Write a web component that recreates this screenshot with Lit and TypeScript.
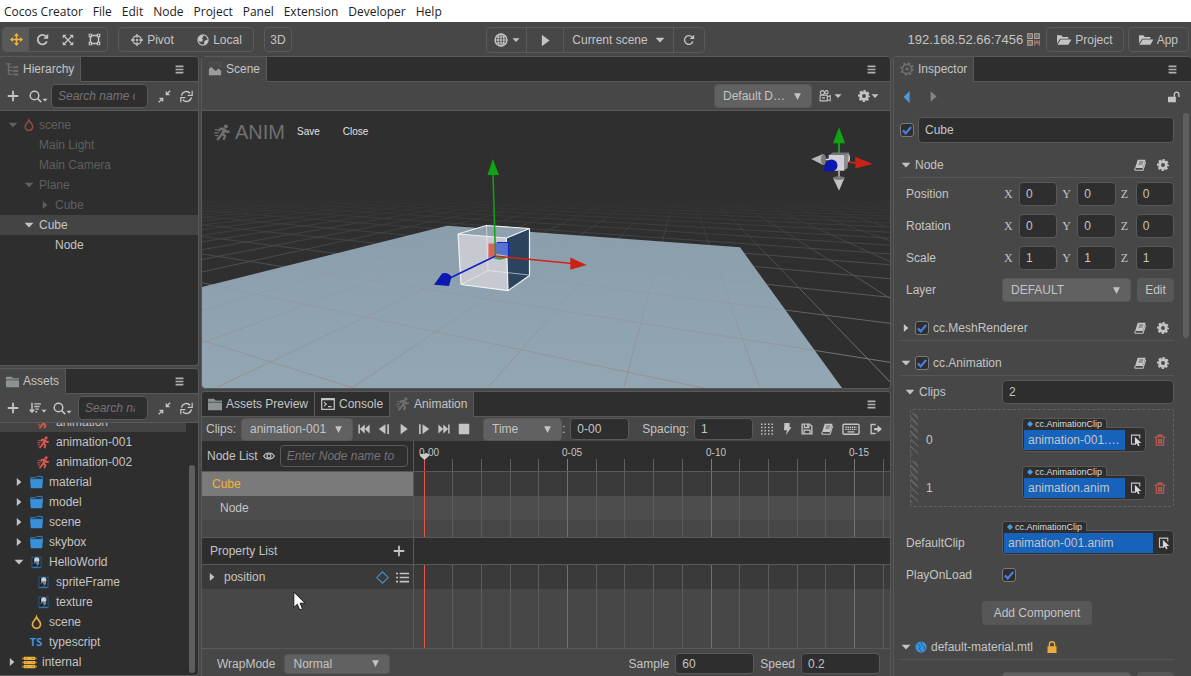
import { LitElement, html, svg, css, nothing, TemplateResult } from "lit";
import { customElement, state } from "lit/decorators.js";
import { classMap } from "lit/directives/class-map.js";
import { styleMap } from "lit/directives/style-map.js";

const f = "currentColor";

const runner = svg`
  <circle cx="11.2" cy="2.3" r="1.9" fill=${f} />
  <path d="M10 4.6 7.6 9.2 10.4 11.2 9 15M7.6 9.2 5.6 12 3 15M10 4.6 6.2 4.4 4.6 6.6M10 5.2 12 7.6 14.6 7" fill="none" stroke=${f} stroke-width="2.2" stroke-linejoin="round" />
  <path d="M8.500 4 11.500 5.500 9.500 9.800 6.800 8.600z" fill=${f} />
  <path d="M1 5.5h3M0 8.3h4.5M1 11h3" stroke=${f} stroke-width="1.1" />`;

const picture = svg`
  <rect x="2.500" y="1.500" width="11" height="13" fill="#0d1c2b" stroke="#2a6ea8" />
  <circle cx="8.300" cy="4.800" r="3.300" fill="#c9d0d4" />
  <circle cx="8" cy="9.600" r="3.600" fill="#7d868c" />
  <path d="M4 10 7 8l2 4 3-3v4H5z" fill="#20262b" />
  <path d="M3 13.800h10" stroke="#3d93d6" />`;

const icons: Record<string, TemplateResult<2>> = {
  move: svg`<path d="M8 0 11 3.600H9v3.400h3.400V5L16 8l-3.600 3V9H9v3.400h2L8 16l-3-3.600h2V9H3.600v2L0 8l3.600-3v2H7V3.600H5z" fill=${f} />`,
  rotate: svg`<path d="M13.300 10.300A5.800 5.800 0 1 1 12 4" fill="none" stroke=${f} stroke-width="2.300" /><path d="M15 1v6.200H8.800z" fill=${f} />`,
  scale: svg`<path d="M3 3 13 13M13 3 3 13" stroke=${f} stroke-width="1.800" /><path d="M1 1h5L1 6zM15 1v5L10 1zM1 15v-5l5 5zM15 15h-5l5-5z" fill=${f} />`,
  rect: svg`<path d="M3 3h10v10H3z" fill="none" stroke=${f} stroke-width="1.800" /><path d="M.8.8h4.400v4.400H.8zM10.800.8h4.400v4.400h-4.400zM.8 10.800h4.400v4.400H.8zM10.800 10.800h4.400v4.400h-4.400z" fill=${f} /><path d="M2.300 2.300h1.400v1.400H2.300zM12.300 2.300h1.400v1.400h-1.400zM2.300 12.300h1.400v1.400H2.300zM12.300 12.300h1.400v1.400h-1.400z" fill="#474747" />`,
  pivot: svg`<circle cx="8" cy="8" r="5.600" fill="none" stroke=${f} stroke-width="1.600" /><path d="M8 0v5M8 11v5M0 8h5M11 8h5M8 6.500v3M6.500 8h3" stroke=${f} stroke-width="1.800" />`,
  globe: svg`<circle cx="8" cy="8" r="6.800" fill="none" stroke=${f} stroke-width="1.500" /><path d="M1.500 8C1.500 4 5 1.500 8 1.500c1 2-.5 3.500-2 4.500 2 0 2.500 2 1 3.500S3 11 1.500 8zM9.500 10l3-2.500 2 .5c0 3-2 5.500-5 6.500z" fill=${f} />`,
  web: svg`<circle cx="8" cy="8" r="6.800" fill="none" stroke=${f} stroke-width="1.600" /><path d="M8 1v14M1 8h14M2.500 4.500h11M2.500 11.500h11" stroke=${f} stroke-width="1.200" /><ellipse cx="8" cy="8" rx="3.400" ry="6.800" fill="none" stroke=${f} stroke-width="1.300" />`,
  play: svg`<path d="M3.500 1 13 8l-9.500 7z" fill=${f} />`,
  reload: svg`<path d="M13.300 10A5.800 5.800 0 1 1 12 4" fill="none" stroke=${f} stroke-width="1.800" /><path d="M14.800 1v5.800H9z" fill=${f} />`,
  down: svg`<path d="M1 4.500h14L8 11.800z" fill=${f} />`,
  right: svg`<path d="M4.500 1.500v13L11.800 8z" fill=${f} />`,
  arrow: svg`<path d="M2 2h12L8 14z" fill=${f} />`,
  menu: svg`<path d="M1 2.500h14M1 8h14M1 13.500h14" stroke=${f} stroke-width="3" />`,
  tree: svg`<path d="M0 1h6M3 1v13M3 5h5M8 9.500H3M3 14h5" stroke="#6d6d6d" stroke-width="1.600" fill="none" /><path d="M9 4h6v2.500H9zM9 8.500h6V11H9zM9 13h6v2.500H9z" fill="#6d6d6d" />`,
  scenery: svg`<path d="M1 15V8l3-2.500L7 9l2 1 3-2.500L15 10v5z" fill="#9a9c9c" /><path d="M1 1h2M5 1h2M9 1h2M13 1h2M1 4h1M7 4h1M13 4h2" stroke="#5d5d5d" stroke-width="1.500" />`,
  gearline: svg`<circle cx="8" cy="8" r="5.300" fill="none" stroke=${f} stroke-width="1.800" /><circle cx="8" cy="8" r="6.800" fill="none" stroke=${f} stroke-width="2" stroke-dasharray="2.400 2.940" /><circle cx="8" cy="8" r="1.800" fill=${f} />`,
  gear: svg`<circle cx="8" cy="8" r="4.500" fill="none" stroke=${f} stroke-width="3.800" /><circle cx="8" cy="8" r="6.800" fill="none" stroke=${f} stroke-width="2.400" stroke-dasharray="3 2.340" stroke-dashoffset="1.500" />`,
  tabfolder: svg`<path d="M0 2h7l1.500 2H16v11H0z" fill="#8d9393" /><path d="M0 6h16" stroke="#4b4b4b" />`,
  folder: svg`<path d="M1 2h6l1.500-1.500H15V4H1z" fill="none" stroke="#3990d8" /><path d="M0 4h16l-1 11H1z" fill="#3990d8" />`,
  openfolder: svg`<path d="M0 12V2.500h5l1.500 2H13V6.500H3.500z" fill=${f} /><path d="M4.200 7.500H16.500L13 13.500H.5z" fill=${f} />`,
  plus: svg`<path d="M8 1v14M1 8h14" stroke=${f} stroke-width="2.400" />`,
  search: svg`<circle cx="6.800" cy="6.800" r="5.300" fill="none" stroke=${f} stroke-width="1.800" /><path d="m10.500 10.500 4.500 4.500" stroke=${f} stroke-width="2" />`,
  sort: svg`<path d="M4 1v12M1 10l3 3.500L7 10" fill="none" stroke=${f} stroke-width="2" /><path d="M7 2.500h9M7 6h7M8.500 9.500H13M8.500 13H11" stroke=${f} stroke-width="1.900" />`,
  collapse: svg`<path d="M9.500 1v5.500H15zM1 9.500h5.500V15z" fill=${f} /><path d="m10 6 5-5M6 10l-5 5" stroke=${f} stroke-width="1.700" />`,
  refresh: svg`<path d="M2 7a6 6 0 0 1 10.500-3M14 9a6 6 0 0 1-10.500 3" fill="none" stroke=${f} stroke-width="1.600" /><path d="M15 1v5.500H9.500M1 15V9.500h5.500" fill="none" stroke=${f} stroke-width="1.500" />`,
  flame: svg`<path d="M8 1.200C9 4 13 6.500 13 10.300A5 4.900 0 0 1 3 10.300C3 6.500 7 4.500 8 1.200z" fill="none" stroke=${f} stroke-width="2.100" />`,
  runner,
  picture,
  stack: svg`<path d="M1 1h14v4H1zM1 6h14v4H1zM1 11h14v4H1z" fill="#e9b143" /><path d="M0 2v2M0 7v2M0 12v2M16 2v2M16 7v2M16 12v2" stroke="#e9b143" stroke-width="1.500" /><path d="M3 3h2M3 8h2M3 13h2M11 3h2M11 8h2M11 13h2" stroke="#a87c2e" />`,
  console: svg`<path d="M.8 1.800h14.400v12.400H.8z" fill="none" stroke=${f} stroke-width="1.400" /><path d="M1 3h14" stroke=${f} stroke-width="1.600" /><path d="m3.500 6 2.500 2.200-2.500 2.200M8 11h4" fill="none" stroke=${f} stroke-width="1.300" />`,
  camera: svg`<circle cx="4.500" cy="3.500" r="2.700" fill="none" stroke=${f} stroke-width="1.400" /><circle cx="10" cy="3" r="2.200" fill="none" stroke=${f} stroke-width="1.400" /><path d="M1.500 7h9.500v7.500H1.500zM11 9.500l4-2v7l-4-2M4 10.500h4" fill="none" stroke=${f} stroke-width="1.400" />`,
  qr: svg`<path d="M1 1h5.500v5.500H1zM9.500 1H15v5.500H9.500zM1 9.500h5.500V15H1z" fill="none" stroke="#b5a79c" stroke-width="1.500" /><path d="M3 3h1.500v1.500H3zM11.500 3H13v1.500h-1.500zM3 11.500h1.500V13H3z" fill="#c4c4c4" /><path d="M9.500 9v6.500M12.300 9v4M15 9v6.500M9.500 12h5" stroke="#b98574" stroke-width="1.400" />`,
  book: svg`<path d="M5 1h10.500L12 12H1.500z" fill=${f} /><path d="M1.500 12c-1 2 0 3 1 3H12L15.500 4" fill="none" stroke=${f} stroke-width="1.500" /><path d="M6.800 4h5.500M6 6.700h5.500" stroke="#474747" stroke-width="1.100" />`,
  unlock: svg`<path d="M0 7.500h10.500V15H0z" fill=${f} /><path d="M8.500 8V4.500a3 3 0 0 1 6 0V8" fill="none" stroke=${f} stroke-width="1.800" />`,
  lock: svg`<path d="M2 7h12v9H2z" fill=${f} /><path d="M4.500 7.500V4.500a3.500 3.500 0 0 1 7 0v3" fill="none" stroke=${f} stroke-width="1.800" />`,
  left: svg`<path d="M11.500 0v16L3.500 8z" fill=${f} />`,
  first: svg`<path d="M.5 2h2v12h-2zM9 2v12L2.500 8zM15.500 2v12L9 8z" fill=${f} />`,
  last: svg`<path d="M15.500 2h-2v12h2zM7 2v12l6.500-6zM.5 2v12L7 8z" fill=${f} />`,
  prev: svg`<path d="M10 1.500v13L1 8z" fill=${f} /><path d="M13.500 1.500v13" stroke=${f} stroke-width="2.200" />`,
  next: svg`<path d="M6 1.500v13L15 8z" fill=${f} /><path d="M2.500 1.500v13" stroke=${f} stroke-width="2.200" />`,
  stop: svg`<rect x="1" y="1" width="14" height="14" rx="1" fill=${f} />`,
  dots: svg`<path d="M0 1.500h16M0 6h16M0 10.300h16M0 14.700h16" stroke=${f} stroke-width="2" stroke-dasharray="2 2.660" />`,
  bolt: svg`<path d="M4.500 0h7v5.500h2.500L6.500 16 8 9.500H4z" fill=${f} />`,
  save: svg`<path d="M1.500 1.500h10l3 3v10h-13z" fill="none" stroke=${f} stroke-width="1.800" /><path d="M4.500 2v4h6V2M4 14.500V9.500h8v5" fill="none" stroke=${f} stroke-width="1.700" /><path d="M8 2h2v3H8z" fill=${f} />`,
  keyboard: svg`<rect x="-1.200" y="2.500" width="18.400" height="11.500" rx="1.500" fill="none" stroke=${f} stroke-width="1.600" /><path d="M1.500 6h13M1.500 8.500h13" stroke=${f} stroke-width="1.500" stroke-dasharray="1.700 .8" /><path d="M4 11.300h8" stroke=${f} stroke-width="1.600" />`,
  exit: svg`<path d="M7.500 2h-6v12h6" fill="none" stroke=${f} stroke-width="1.800" /><path d="M5.500 6.500H10V3l6 5-6 5V9.500H5.500z" fill=${f} />`,
  eye: svg`<path d="M.8 8C4 2.500 12 2.500 15.200 8 12 13.500 4 13.500.8 8z" fill="none" stroke=${f} stroke-width="1.400" /><circle cx="8" cy="8" r="2.600" fill="none" stroke=${f} stroke-width="1.500" />`,
  diamond: svg`<path d="M8 1 15 8 8 15 1 8z" fill="none" stroke="#4596d8" stroke-width="1.300" />`,
  dot: svg`<path d="M8 0 16 8 8 16 0 8z" fill="#4a9ade" />`,
  list: svg`<path d="M0 3h2.500M0 8h2.500M0 13h2.500M4.500 3H16M4.500 8H16M4.500 13H16" stroke=${f} stroke-width="2" />`,
  pick: svg`<path d="M7 13.500H2v-12h11V6" fill="none" stroke=${f} stroke-width="1.500" /><path d="M6.500 3.500v11.500l2.600-2.300 1.700 3.500 2-1-1.600-3.200h3.800z" fill="#d8d8d8" />`,
  trash: svg`<path d="M1 4h14M5.500 3.500V1.500h5v2M2.800 4.500 3.300 15h9.400l.5-10.500M6 6.500v6.500M8 6.500v6.500M10 6.500v6.500" fill="none" stroke="#cc5b53" stroke-width="1.500" />`,
  material: svg`<circle cx="8" cy="8" r="7.500" fill="#3b92da" /><path d="M3 3l4 4-1 4 3 4M8 1l1 4 4 3-1 4" fill="none" stroke="#1f5f98" stroke-width="1.200" />`,
  check: svg`<path d="m2.500 8.500 3.800 4L13.500 4" fill="none" stroke="#4a7ddd" stroke-width="3" />`,
};

const icon = (name: string, size = 12, tone = "") =>
  html`<svg class=${"ic " + tone} width=${size} height=${size} viewBox="0 0 16 16" aria-hidden="true">${icons[name]}</svg>`;

interface Row {
  label: string;
  depth: number;
  arrow?: "down" | "right";
  icon?: string;
  tone?: string;
  on?: boolean;
  dim?: boolean;
}

const MENU = ["Cocos Creator", "File", "Edit", "Node", "Project", "Panel", "Extension", "Developer", "Help"];

const NODES: Row[] = [
  { label: "scene", depth: 0, arrow: "down", icon: "flame", tone: "rust", dim: true },
  { label: "Main Light", depth: 1, dim: true },
  { label: "Main Camera", depth: 1, dim: true },
  { label: "Plane", depth: 1, arrow: "down", dim: true },
  { label: "Cube", depth: 2, arrow: "right", dim: true },
  { label: "Cube", depth: 1, arrow: "down", on: true },
  { label: "Node", depth: 2 },
];

const ASSETS: Row[] = [
  { label: "animation", depth: 2, icon: "runner", tone: "red", on: true },
  { label: "animation-001", depth: 2, icon: "runner", tone: "red" },
  { label: "animation-002", depth: 2, icon: "runner", tone: "red" },
  { label: "material", depth: 1, arrow: "right", icon: "folder" },
  { label: "model", depth: 1, arrow: "right", icon: "folder" },
  { label: "scene", depth: 1, arrow: "right", icon: "folder" },
  { label: "skybox", depth: 1, arrow: "right", icon: "folder" },
  { label: "HelloWorld", depth: 1, arrow: "down", icon: "picture" },
  { label: "spriteFrame", depth: 2, icon: "picture" },
  { label: "texture", depth: 2, icon: "picture" },
  { label: "scene", depth: 1, icon: "flame", tone: "amber" },
  { label: "typescript", depth: 1, icon: "ts" },
  { label: "internal", depth: 0, arrow: "right", icon: "stack" },
];

const TRANSFORM: [string, string][] = [["Position", "0"], ["Rotation", "0"], ["Scale", "1"]];

/* Timeline: pixels per frame, where frame zero sits, and the width the other columns take */
const FRAME = 28.7;
const ORIGIN = 10;
const CHROME = 717;
const frameX = (i: number) => Math.floor(ORIGIN + i * FRAME);

/* Ground grid: two vanishing points on the horizon */
const HORIZON = 167;
const range = (a: number, b: number) => Array.from({ length: b - a + 1 }, (_, i) => a + i);
const gridPath = [
  ...range(-36, 14).map((k) => `M682 ${HORIZON}L${895 + 135.5 * k} 387`),
  ...range(-3, 20).map((k) => `M-349 ${HORIZON}L890 ${HORIZON + 1 / (0.00512 + 0.001277 * k)}`),
].join("");

@customElement("app-root")
export class AppRoot extends LitElement {
  @state() private tab = "Animation";
  @state() private pageWidth = window.innerWidth;

  private onResize = () => (this.pageWidth = window.innerWidth);

  connectedCallback() {
    super.connectedCallback();
    window.addEventListener("resize", this.onResize);
  }

  disconnectedCallback() {
    window.removeEventListener("resize", this.onResize);
    super.disconnectedCallback();
  }

  private get frames() {
    return range(0, Math.max(0, Math.floor((this.pageWidth - CHROME) / FRAME)));
  }

  static styles = css`
    :host { display: block; font: 12px/16px "Liberation Sans", Arial, sans-serif; color: #c4c4c4; --bg: #474747; --dark: #2e2e2e; --line: #595959; }
    * { box-sizing: border-box; }
    .app { display: flex; flex-direction: column; height: 100vh; min-height: 600px; background: var(--bg); overflow: hidden; }
    button, input, select { font: inherit; color: inherit; margin: 0; }
    button { background: none; border: 0; padding: 0; display: inline-flex; align-items: center; justify-content: center; flex: none; }
    .ic { display: block; flex: none; overflow: visible; }
    .red { color: #d9584f; } .rust { color: #8d4a40; } .amber { color: #e9ad3f; } .blue { color: #4a9ade; } .grey { color: #858585; } .faint { color: #6f6f6f; }

    .menubar { display: flex; gap: 10px; height: 22px; flex: none; background: #fff; padding: 0 4px; font: 12px/23px "Open Sans", "Noto Sans", sans-serif; color: #1c1c1c; }
    .menubar button { align-items: flex-start; }
    .topbar { display: grid; grid-template-columns: 1fr auto 1fr; height: 34px; flex: none; padding: 5px 2px 0; align-items: start; }
    .tools { display: flex; gap: 10px; }
    .tools.end { justify-content: flex-end; gap: 4px; align-items: center; }
    .group { display: flex; border: 1px solid var(--line); border-radius: 4px; overflow: hidden; height: 25px; }
    .group button { width: 26px; }
    .group .on { background: #595959; color: #efb340; }
    .group .wide { width: 67px; gap: 4px; }
    .group.mid { height: 26px; }
    .group.mid button { width: 37px; gap: 4px; border-right: 1px solid var(--line); }
    .group.mid .globe { width: 40px; }
    .group.mid .pick { width: 110px; gap: 7px; }
    .group.mid button:last-child { border-right: 0; width: 30px; }
    .ip { font-size: 13px; }
    .bordered { border: 1px solid var(--line); border-radius: 4px; height: 25px; padding: 0 10px; gap: 4px; margin-left: 2px; }
    .bordered + .bordered { margin-left: 0; }

    .work { flex: 1; min-height: 0; display: grid; grid-template-columns: 199px minmax(0, 1fr) 298px; gap: 2px; }
    .side { display: grid; grid-template-rows: 310fr 308fr; gap: 2px; min-height: 0; }
    .centre { display: grid; grid-template-rows: 333fr 285fr; gap: 2px; min-height: 0; }
    .panel { display: flex; flex-direction: column; min-height: 0; min-width: 0; border: 1px solid var(--line); border-radius: 4px; overflow: hidden; }
    .side .panel { border-left: 0; border-top-left-radius: 0; border-bottom-left-radius: 0; }
    .inspector { border-right: 0; }
    .panel.open { border-bottom: 0; border-bottom-left-radius: 0; border-bottom-right-radius: 0; }
    .tabs { display: flex; height: 25px; flex: none; background: var(--dark); }
    .tab { gap: 4px; padding: 0 6px; border-right: 1px solid var(--line); border-bottom: 1px solid var(--line); }
    .tab.on { background: var(--bg); border-bottom-color: var(--bg); }
    .fill { flex: 1; display: flex; align-items: center; justify-content: flex-end; padding-right: 14px; border-bottom: 1px solid var(--line); color: #b0b0b0; }
    .bar { display: flex; align-items: center; height: 29px; flex: none; padding: 0 5px 0 7px; gap: 10px; border-bottom: 1px solid var(--line); }
    .bar input { flex: 1; min-width: 0; height: 24px; }
    .bar .more { gap: 0; align-items: flex-end; }
    .bar .near { margin-left: -7px; }
    .bar .close { margin-left: -4px; }
    .bar .pair { display: flex; gap: 9px; }
    .field { background: var(--dark); border: 1px solid var(--line); border-radius: 4px; padding: 0 6px; height: 24px; min-width: 0; outline: 0; }
    .field::placeholder { color: #77727a; font-style: italic; opacity: 1; }
    .field.find { padding: 0 12px 0 6px; }

    .rows { flex: 1; min-height: 0; background: var(--dark); padding: 4px 0; overflow: hidden; }
    .row { display: flex; align-items: center; height: 20px; }
    .row .ar { width: 12px; margin-right: 4px; display: flex; justify-content: center; }
    .row .ico { margin-right: 4px; }
    .row.on { background: #444; }
    .row.dim { color: #5f5f5f; }
    .split { flex: 1; display: flex; min-height: 0; background: var(--dark); overflow: hidden; }
    .split .rows { padding: 0; margin-top: -11px; }
    .split .row .ico { width: 14px; display: flex; justify-content: center; margin-right: 6px; }
    .ts { color: #3f97dd; font: bold 11px/16px "Open Sans", sans-serif; }
    .thumb { width: 6px; border-radius: 3px; background: #5e5e5e; margin: 42px 3px 2px 3px; }

    .sel { display: grid; align-items: center; height: 24px; background: #616161; border: 1px solid #585858; border-radius: 4px; flex: none; min-width: 0; }
    .sel select { grid-area: 1/1; appearance: none; background: none; border: 0; outline: 0; padding: 0 24px 0 8px; width: 100%; height: 100%; min-width: 0; }
    .sel .ic { grid-area: 1/1; justify-self: end; margin-right: 9px; pointer-events: none; }
    .w98 { width: 98px; } .w112 { width: 112px; } .w79 { width: 79px; } .w106 { width: 106px; }
    .scenebar { justify-content: flex-end; padding-right: 11px; gap: 7px; }
    .scenebar .more { gap: 3px; align-items: center; }
    .scenebar .more + .more { margin-left: 9px; gap: 1px; }

    .view { flex: 1; min-height: 0; display: grid; background: #2f2f2f; }
    .view > * { grid-area: 1/1; min-width: 0; min-height: 0; }
    .world { width: 100%; height: 100%; display: block; }
    .hud { display: flex; align-items: center; align-self: start; height: 42px; padding-left: 12px; gap: 12px; font-size: 10px; color: #e0e0e0; }
    .hud .mode { display: flex; align-items: center; gap: 4px; font-size: 20px; line-height: 24px; color: #707070; }
    .hud button { margin-right: 11px; }

    .clipbar { display: flex; align-items: center; height: 24px; flex: none; padding: 0 11px 0 4px; overflow: hidden; }
    .clipbar .sel { height: 23px; margin-left: 5px; }
    .clipbar .field { width: 59px; height: 22px; margin-left: 5px; flex: none; }
    .clipbar label { margin-left: 13px; white-space: nowrap; }
    .transport { display: flex; gap: 8px; margin: 0 13px 0 5px; }
    .clipbar .transport + .sel { margin-left: 0; }
    .actions { display: flex; align-items: center; gap: 8px; margin-left: 8px; }
    .actions .kb { margin: 0 4px 0 3px; }
    .tl { flex: 1; min-height: 0; display: grid; grid-template-columns: 212px minmax(0, 1fr); grid-template-rows: 31px 66px 27px minmax(0, 1fr); border-bottom: 1px solid var(--line); }
    .cell { border-right: 1px solid var(--line); position: relative; min-height: 0; min-width: 0; }
    .head { display: flex; align-items: center; background: var(--dark); border-bottom: 1px solid var(--line); padding: 0 5px; gap: 5px; }
    .head .field { flex: 1; height: 22px; padding-right: 12px; }
    .head.plist { justify-content: space-between; padding: 0 8px; }
    .ruler { background: var(--dark); border-bottom: 1px solid var(--line); }
    .track { background: linear-gradient(#3a3a3a 24px, #4d4d4d 24px, #4d4d4d 48px, var(--bg) 48px); border-bottom: 1px solid var(--line); min-height: 0; overflow: hidden; }
    .track.one { background: linear-gradient(#3a3a3a 24px, var(--bg) 24px); border-bottom: 0; }
    .strip { border-bottom: 1px solid var(--line); }
    .strip.one { border-bottom: 0; }
    .item { display: flex; align-items: center; height: 24px; padding: 0 10px; }
    .item.cube { background: #7a7a7a; color: #f0b136; }
    .item.sub { background: #4d4d4d; padding-left: 18px; }
    .item.curve { background: #3a3a3a; padding: 0 4px 0 5px; gap: 7px; }
    .grow { flex: 1; }
    .canvas { display: block; width: 100%; height: 100%; shape-rendering: crispEdges; }
    .canvas text { font-size: 10px; fill: #c4c4c4; }
    .pointer { position: absolute; left: 91px; top: 26px; }
    .foot { display: flex; align-items: center; height: 27px; flex: none; padding: 2px 10px 0 15px; gap: 6px; }
    .foot .sel { height: 20px; margin-left: 3px; }
    .foot .field { width: 79px; height: 21px; }

    .nav { display: flex; align-items: center; height: 29px; flex: none; padding: 0 11px 0 7px; gap: 14px; }
    .scroll { flex: 1; min-height: 0; display: flex; overflow: hidden; }
    .bin { width: 6px; height: 225px; border-radius: 3px; background: #5e5e5e; margin: 2px 2px 0 0; flex: none; }
    .body { flex: 1; min-width: 0; padding: 6px 9px 0 6px; }
    .ck { display: inline-grid; width: 14px; height: 14px; flex: none; place-items: center; }
    .ck input { grid-area: 1/1; appearance: none; width: 14px; height: 14px; background: var(--dark); border: 1px solid #7b7b7b; border-radius: 3px; }
    .ck .ic { grid-area: 1/1; pointer-events: none; }
    .title { display: flex; align-items: center; gap: 4px; }
    .title .field { flex: 1; height: 26px; }
    .sec { display: flex; align-items: center; height: 26px; border-bottom: 1px solid #565656; padding: 0 5px 0 1px; gap: 4px; }
    .sec.t9 { margin-top: 9px; } .sec.t13 { margin-top: 13px; }
    .sec .mtl { margin-left: 9px; }
    .sec button + button { margin-left: 7px; }
    .props { padding-top: 4px; display: grid; gap: 8px; }
    .prop { display: grid; grid-template-columns: 96px minmax(0, 1fr); align-items: end; padding-left: 6px; }
    .prop .name { display: flex; align-items: center; gap: 4px; height: 24px; }
    .prop .name.fold { margin-left: -1px; }
    .prop.flat { align-items: center; }
    .prop.flat .name { height: 14px; }
    .vec { display: grid; grid-template-columns: repeat(3, 1fr); gap: 3px; }
    .vec label { display: grid; grid-template-columns: 12px minmax(0, 1fr); align-items: center; gap: 3px; font: 12px/16px "Liberation Serif", serif; padding-left: 2px; }
    .vec .field { font: 12px/16px "Liberation Sans", sans-serif; width: 100%; }
    .duo { display: grid; grid-template-columns: 1fr 37px; gap: 6px; }
    .solid { background: #575757; border-radius: 4px; height: 24px; }
    .clips { border: 1px dashed #626262; border-radius: 3px; margin: 5px 0 0 10px; }
    .clip { display: grid; grid-template-columns: 7px 88px minmax(0, 1fr) auto; column-gap: 8px; height: 48px; align-items: end; padding: 0 7px 6px 0; }
    .clip .num, .clip .del { height: 24px; line-height: 24px; }
    .grip { align-self: stretch; margin: 3px 0 -3px; background: repeating-linear-gradient(45deg, #5f5f5f 0 2px, var(--bg) 2px 5px); }
    .ref { display: flex; flex-direction: column; align-items: flex-start; min-width: 0; }
    .kind { display: flex; align-items: center; gap: 2px; height: 10px; padding: 0 4px; font-size: 9px; line-height: 10px; background: var(--dark); border: 1px solid var(--line); border-bottom: 0; border-radius: 3px 3px 0 0; position: relative; margin-bottom: -1px; color: #dcdcdc; }
    .slot { display: flex; align-items: center; width: 100%; height: 25px; background: var(--dark); border: 1px solid var(--line); border-radius: 0 4px 4px 4px; padding: 0 3px 0 1px; gap: 5px; }
    .slot span { flex: 1; min-width: 0; height: 20px; line-height: 20px; background: #1762bb; padding: 0 4px; overflow: hidden; text-overflow: ellipsis; white-space: nowrap; }
    .extra { display: grid; gap: 13px; margin-top: 14px; }
    .add { display: flex; justify-content: center; margin: 19px 0 9px; }
    .add .solid { width: 110px; }
    .tail { margin-top: 12px; }
  `;

  private tree(rows: Row[], base: number, step: number, size: number) {
    return rows.map(
      (r) => html`<div class=${classMap({ row: true, on: !!r.on, dim: !!r.dim })} style=${styleMap({ paddingLeft: base + r.depth * step + "px" })}>
        <span class="ar">${r.arrow ? icon(r.arrow, 10) : nothing}</span>
        ${r.icon === "ts" ? html`<span class="ico ts">TS</span>` : r.icon ? html`<span class="ico">${icon(r.icon, size, r.tone)}</span>` : nothing}
        <span>${r.label}</span>
      </div>`
    );
  }

  private select(label: string, value: string, width = "") {
    return html`<span class=${"sel " + width}><select aria-label=${label}><option>${value}</option></select>${icon("arrow", 9)}</span>`;
  }

  private check(label: string) {
    return html`<span class="ck"><input type="checkbox" checked aria-label=${label} />${icon("check", 12)}</span>`;
  }

  private btn(name: string, label: string, size = 12, cls = "", tone = "") {
    return html`<button class=${cls} aria-label=${label}>${icon(name, size, tone)}</button>`;
  }

  private ref(value: string) {
    return html`<div class="ref">
      <div class="kind">${icon("dot", 6)}cc.AnimationClip</div>
      <div class="slot"><span>${value}</span>${this.btn("pick", "Pick asset", 12)}</div>
    </div>`;
  }

  private fill() {
    return html`<div class="fill">${this.btn("menu", "Panel menu", 9)}</div>`;
  }

  private section(name: string, arrow: "down" | "right", checked: boolean, cls = "") {
    return html`<div class=${"sec " + cls}>
      ${icon(arrow, 10)}${checked ? this.check(name + " enabled") : nothing}<span class="grow">${name}</span>
      ${this.btn("book", "Help", 12)}${this.btn("gear", "Settings", 12)}
    </div>`;
  }

  private lanes() {
    return html`<svg class="canvas">
      ${this.frames.map((i) => svg`<rect x=${frameX(i)} y="0" width="1" height="100%" fill=${i % 5 ? "#5c5c5c" : "#717171"} />`)}
      <rect x=${ORIGIN} y="0" width="1" height="100%" fill="#e5564c" />
    </svg>`;
  }

  private world() {
    return html`<svg class="world" viewBox="202 111 688 277" preserveAspectRatio="xMidYMid slice" role="img" aria-label="Scene view">
      <defs>
        <linearGradient id="fade" gradientUnits="userSpaceOnUse" x1="0" y1="196" x2="0" y2="388">
          <stop offset="0" stop-color="#000" /><stop offset="0.15" stop-color="#2c2c2c" /><stop offset="0.5" stop-color="#888" /><stop offset="1" stop-color="#fff" />
        </linearGradient>
        <mask id="depth" maskUnits="userSpaceOnUse" x="0" y="100" width="1300" height="300"><rect x="0" y="196" width="1300" height="200" fill="url(#fade)" /></mask>
        <clipPath id="floor"><path d="M202 287 447 225.700 740 247.300 842 388H202z" /></clipPath>
        <linearGradient id="ground" x1="0" y1="0" x2="0" y2="1"><stop offset="0" stop-color="#8b9eac" /><stop offset="1" stop-color="#93a6b4" /></linearGradient>
        <linearGradient id="seam" gradientUnits="userSpaceOnUse" x1="0" y1="240" x2="0" y2="388"><stop offset="0" stop-color="#958f8f" stop-opacity="0" /><stop offset="1" stop-color="#958f8f" /></linearGradient>
      </defs>
      <g mask="url(#depth)"><path d=${gridPath} fill="none" stroke="#8a8a8a" stroke-width="0.900" /></g>
      <path d="M202 287 447 225.700 740 247.300 842 388H202z" fill="url(#ground)" />
      <g clip-path="url(#floor)"><path d=${gridPath} fill="none" stroke="url(#seam)" stroke-width="1" /></g>

      <path d="M458 234 506.300 238 508 290.700 461 284.500z" fill="#c6c9cf" />
      <path d="M506.300 238 529.500 228.500V275.500L508 290.700z" fill="#2b435c" />
      <path d="M458 234 486.200 225.500 529.500 228.500 506.300 238z" fill="#8da1ae" />
      <path d="M458 234 486.200 225.500 529.500 228.500 506.300 238zM461 284.500 508 290.700 529.500 275.500M458 234 461 284.500M506.300 238 508 290.700M529.500 228.500V275.500" fill="none" stroke="#f1f2f2" stroke-width="1.200" />
      <path d="M486.500 226 488 270.500M461 284.500 488 270.500 529 275" fill="none" stroke="#f1f2f2" stroke-opacity="0.600" />
      <path d="M488.500 243.500h7.500V255l-7.500 3z" fill="#e0605a" />
      <path d="M496 242.500h12.500V256L496 254z" fill="#5a72cc" /><path d="M497 242.500h11.500V256" fill="none" stroke="#1027c9" stroke-width="1.200" />
      <path d="M493 258l7-2 7 1.500q-6 4-14 .5z" fill="#3f9a4b" />
      <path d="M495.500 256 493 174" stroke="#15a01a" stroke-width="1.500" /><path d="M492.800 159 487.500 175H499z" fill="#10a314" />
      <path d="M495.500 256 572 263.500" stroke="#cf2418" stroke-width="1.500" /><path d="M586.600 265 570.300 257.500V269.700z" fill="#cb2217" />
      <path d="M495.500 256 450 278" stroke="#0f1fc2" stroke-width="1.500" /><path d="M434 284.700 442 273.500Q448 271.500 451.500 277L449 286z" fill="#0c18b4" />

      <path d="M839 143v12" stroke="#10a314" stroke-width="2" /><path d="M839 127.300 833 143.300H845z" fill="#10a314" />
      <path d="M848 162l8 1" stroke="#cf2418" stroke-width="1.500" /><path d="M872.700 164 855.300 156.700V168.500z" fill="#cb2217" />
      <path d="M825 159.500h6" stroke="#ddd" stroke-width="1.500" /><path d="M811.300 159 823 154v11z" fill="#b8b8bb" /><ellipse cx="823.500" cy="159.500" rx="2.500" ry="5.500" fill="#7b7b7e" />
      <ellipse cx="848" cy="158" rx="2" ry="4" fill="#cfcfd1" />
      <path d="M828.700 155 833 152.500H849L844 155z" fill="#77777a" /><path d="M828.700 155H844V170.700H828.700z" fill="#d0d0d6" /><path d="M844 155 849 152.500 847.500 168 844 170.700z" fill="#8d8d91" />
      <path d="M839 171v7" stroke="#999" stroke-width="2" /><path d="M833 178H844.500L839 190.700z" fill="#c2c2c4" /><ellipse cx="838.800" cy="178" rx="5.800" ry="1.800" fill="#77777a" />
      <circle cx="831.500" cy="165.500" r="6" fill="#0c17b2" /><path d="M823 171.500 826 163 833 171z" fill="#0c17b2" />
    </svg>`;
  }

  render() {
    const bottomTabs: [string, string, string][] = [["Assets Preview", "tabfolder", ""], ["Console", "console", ""], ["Animation", "runner", "faint"]];
    return html`<div class="app">
      <nav class="menubar">${MENU.map((m) => html`<button>${m}</button>`)}</nav>
      <header class="topbar">
        <div class="tools">
          <div class="group">
            ${this.btn("move", "Move", 13, "on")}${this.btn("rotate", "Rotate", 13)}${this.btn("scale", "Scale", 12)}${this.btn("rect", "Rect", 13)}
          </div>
          <div class="group">
            <button class="wide">${icon("pivot", 12)}Pivot</button><button class="wide">${icon("globe", 12)}Local</button>
          </div>
          <div class="group"><button>3D</button></div>
        </div>
        <div class="group mid">
          <button class="globe" aria-label="Preview platform">${icon("web", 14)}${icon("down", 8)}</button>
          ${this.btn("play", "Play", 13)}
          <button class="pick">Current scene ${icon("down", 10)}</button>
          ${this.btn("reload", "Reload", 12)}
        </div>
        <div class="tools end">
          <span class="ip">192.168.52.66:7456</span>${this.btn("qr", "QR code", 13)}
          <button class="bordered">${icon("openfolder", 14)}Project</button>
          <button class="bordered">${icon("openfolder", 14)}App</button>
        </div>
      </header>

      <main class="work">
        <div class="side">
          <section class="panel">
            <div class="tabs"><button class="tab on">${icon("tree", 13)}Hierarchy</button>${this.fill()}</div>
            <div class="bar">
              ${this.btn("plus", "Create node")}
              <button class="more" aria-label="Search type">${icon("search", 13)}${icon("down", 6)}</button>
              <input class="field find near" aria-label="Search nodes" placeholder="Search name or UUID" />
              <div class="pair">${this.btn("collapse", "Collapse", 13)}${this.btn("refresh", "Refresh", 13)}</div>
            </div>
            <div class="rows">${this.tree(NODES, 7, 16, 12)}</div>
          </section>
          <section class="panel">
            <div class="tabs"><button class="tab on">${icon("tabfolder", 13)}Assets</button>${this.fill()}</div>
            <div class="bar">
              ${this.btn("plus", "Create asset")}
              <button class="more" aria-label="Sort">${icon("sort", 12)}${icon("down", 6)}</button>
              <button class="more close" aria-label="Search type">${icon("search", 13)}${icon("down", 6)}</button>
              <input class="field find close" aria-label="Search assets" placeholder="Search name" />
              <div class="pair">${this.btn("collapse", "Collapse", 13)}${this.btn("refresh", "Refresh", 13)}</div>
            </div>
            <div class="split"><div class="rows">${this.tree(ASSETS, 6, 7, 13)}</div><div class="thumb"></div></div>
          </section>
        </div>

        <div class="centre">
          <section class="panel">
            <div class="tabs"><button class="tab on">${icon("scenery", 14)}Scene</button>${this.fill()}</div>
            <div class="bar scenebar">
              ${this.select("Design resolution", "Default D…", "w98")}
              <button class="more" aria-label="Camera">${icon("camera", 12)}${icon("down", 8)}</button>
              <button class="more" aria-label="Gizmo settings">${icon("gear", 12)}${icon("down", 8)}</button>
            </div>
            <div class="view">
              ${this.world()}
              <div class="hud"><span class="mode">${icon("runner", 17)}ANIM</span><button>Save</button><button>Close</button></div>
            </div>
          </section>

          <section class="panel open">
            <div class="tabs">
              ${bottomTabs.map(([name, ic, tone]) => html`<button class=${classMap({ tab: true, on: this.tab === name })} @click=${() => (this.tab = name)}>${icon(ic, 14, tone)}${name}</button>`)}
              ${this.fill()}
            </div>
            <div class="clipbar">
              <span>Clips:</span>${this.select("Clips", "animation-001", "w112")}
              <div class="transport">
                ${this.btn("first", "First frame")}${this.btn("prev", "Previous frame")}${this.btn("play", "Play")}${this.btn("next", "Next frame")}${this.btn("last", "Last frame")}${this.btn("stop", "Stop")}
              </div>
              ${this.select("Unit", "Time", "w79")}:
              <input class="field" aria-label="Current time" value="0-00" />
              <label for="spacing">Spacing:</label><input id="spacing" class="field" value="1" />
              <div class="actions">
                ${this.btn("dots", "Arrange")}${this.btn("bolt", "Events")}${this.btn("save", "Save")}${this.btn("book", "Help")}${this.btn("keyboard", "Shortcuts", 14, "kb")}${this.btn("exit", "Exit")}
              </div>
            </div>
            <div class="tl">
              <div class="cell head">Node List ${icon("eye", 12)}<input class="field" aria-label="Filter nodes" placeholder="Enter Node name to filter" /></div>
              <div class="ruler">
                <svg class="canvas">
                  ${this.frames.map((i) => svg`<rect x=${frameX(i)} y="18" width="1" height="12" fill=${i % 5 ? "#606060" : "#7c7c7c"} />`)}
                  ${this.frames.filter((i) => i % 5 === 0).map((i) => svg`<text x=${frameX(i) - 5} y="15">0-${String(i).padStart(2, "0")}</text>`)}
                  <rect x=${ORIGIN} y="17" width="1" height="13" fill="#e5564c" />
                  <path d="M6 13h9v2l-4.500 4L6 15z" fill="#c9c9c9" shape-rendering="auto" />
                </svg>
              </div>
              <div class="cell strip"><div class="item cube">Cube</div><div class="item sub">Node</div></div>
              <div class="track">${this.lanes()}</div>
              <div class="cell head plist">Property List ${this.btn("plus", "Add property", 12)}</div>
              <div class="ruler"></div>
              <div class="cell strip one">
                <div class="item curve">${icon("right", 10)}<span class="grow">position</span>${this.btn("diamond", "Key frame", 13)}${this.btn("list", "Property menu", 13)}</div>
                <svg class="pointer" width="13" height="20" viewBox="0 0 13 20" aria-hidden="true"><path d="M.8 1v15.500l3.500-3.300 2.500 5.800 2.700-1.200-2.400-5.600h5z" fill="#fff" stroke="#1a1a1a" /></svg>
              </div>
              <div class="track one">${this.lanes()}</div>
            </div>
            <div class="foot">
              <span>WrapMode</span>${this.select("WrapMode", "Normal", "w106")}<span class="grow"></span>
              <label for="sample">Sample</label><input id="sample" class="field" value="60" />
              <label for="speed">Speed</label><input id="speed" class="field" value="0.2" />
            </div>
          </section>
        </div>

        <section class="panel inspector open">
          <div class="tabs"><button class="tab on">${icon("gearline", 14, "faint")}Inspector</button>${this.fill()}</div>
          <div class="nav">${this.btn("left", "Back", 12, "", "blue")}${this.btn("right", "Forward", 13, "", "grey")}<span class="grow"></span>${this.btn("unlock", "Lock", 12)}</div>
          <div class="scroll">
            <div class="body">
              <div class="title">${this.check("Node active")}<input class="field" aria-label="Node name" value="Cube" /></div>
              ${this.section("Node", "down", false, "t9")}
              <div class="props">
                ${TRANSFORM.map(([name, v]) => html`<div class="prop"><span class="name">${name}</span>
                  <div class="vec">${["X", "Y", "Z"].map((a) => html`<label>${a}<input class="field" value=${v} /></label>`)}</div></div>`)}
                <div class="prop"><span class="name">Layer</span><div class="duo">${this.select("Layer", "DEFAULT")}<button class="solid">Edit</button></div></div>
              </div>
              ${this.section("cc.MeshRenderer", "right", true, "t13")}
              ${this.section("cc.Animation", "down", true, "t9")}
              <div class="props">
                <div class="prop"><label class="name fold" for="clips">${icon("down", 10)}Clips</label><input id="clips" class="field" value="2" /></div>
              </div>
              <div class="clips">
                ${["animation-001.anim", "animation.anim"].map((c, i) => html`<div class="clip"><span class="grip"></span><span class="num">${i}</span>${this.ref(c)}${this.btn("trash", "Remove clip", 12, "del")}</div>`)}
              </div>
              <div class="extra">
                <div class="prop"><span class="name">DefaultClip</span>${this.ref("animation-001.anim")}</div>
                <div class="prop flat"><span class="name">PlayOnLoad</span>${this.check("PlayOnLoad")}</div>
              </div>
              <div class="add"><button class="solid">Add Component</button></div>
              <div class="sec">${icon("down", 10)}${icon("material", 12)}<span>default-material.mtl</span>${icon("lock", 12, "amber mtl")}</div>
              <div class="prop tail"><span></span><div class="duo">${this.select("Technique", "")}<button class="solid" aria-label="Apply"></button></div></div>
            </div>
            <div class="bin"></div>
          </div>
        </section>
      </main>
    </div>`;
  }
}
